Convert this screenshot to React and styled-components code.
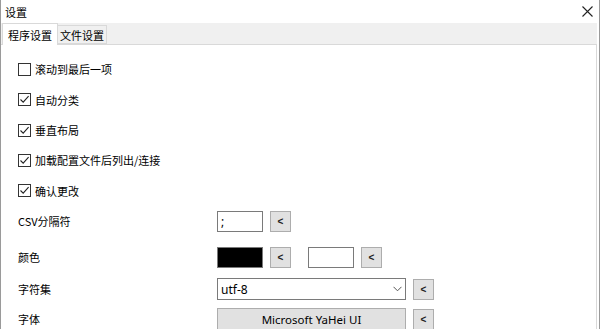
import React from "react";
import styled, { createGlobalStyle } from "styled-components";

const Global = createGlobalStyle`
  html, body { margin: 0; padding: 0; background: #fff; }
  body { width: 600px; height: 329px; overflow: hidden;
    font-family: "Microsoft YaHei UI", "Noto Sans CJK SC", "Noto Sans", sans-serif;
    font-size: 11px; color: #000; }
`;

const Window = styled.div`
  width: 598px;
  height: 329px;
  border-left: 1px solid #9a9a9a;
  border-right: 1px solid #9a9a9a;
  display: flex;
  flex-direction: column;
  background: #fff;
  overflow: hidden;
`;

const TitleBar = styled.div`
  height: 23px;
  flex: none;
  display: flex;
  align-items: center;
  justify-content: space-between;
  padding: 0 6px 0 4px;
`;

const Title = styled.span`
  font-size: 11px;
  line-height: 16px;
`;

const TabStrip = styled.div`
  height: 21px;
  flex: none;
  background: #f0f0f0;
  display: flex;
  align-items: flex-end;
  padding-left: 1px;
  margin-right: 2px;
  position: relative;
  z-index: 1;
`;

const Tab = styled.div`
  height: ${(p) => (p.$active ? "22px" : "19px")};
  margin-bottom: ${(p) => (p.$active ? "-1px" : "0")};
  padding: 0 ${(p) => (p.$active ? "5px" : "2px")};
  box-sizing: border-box;
  display: flex;
  align-items: center;
  background: ${(p) => (p.$active ? "#fff" : "#f0f0f0")};
  border: 1px solid #d9d9d9;
  border-bottom: ${(p) => (p.$active ? "none" : "1px solid #d9d9d9")};
  margin-left: ${(p) => (p.$active ? "0" : "-1px")};
  font-size: 11px;
`;

const Panel = styled.div`
  flex: 1;
  border: 1px solid #d9d9d9;
  border-left: none;
  margin-right: 2px;
  background: #fff;
  padding: 9px 0 0 17px;
  display: flex;
  flex-direction: column;
`;

const Row = styled.div`
  height: ${(p) => p.$h}px;
  flex: none;
  display: flex;
  align-items: center;
`;

const Label = styled.div`
  width: 199px;
  flex: none;
  font-size: 11px;
`;

const CheckLabel = styled.label`
  display: flex;
  align-items: center;
  gap: 4px;
  font-size: 11px;
`;

const Box = styled.span`
  width: 13px;
  height: 13px;
  box-sizing: border-box;
  border: 1px solid #333;
  background: #fff;
  display: flex;
  align-items: center;
  justify-content: center;
`;

const Controls = styled.div`
  display: flex;
  align-items: center;
`;

const TextBox = styled.div`
  width: ${(p) => p.$w}px;
  height: ${(p) => p.$hgt || 21}px;
  box-sizing: border-box;
  border: 1px solid #7a7a7a;
  background: #fff;
  padding: 0 3px;
  display: flex;
  align-items: center;
  justify-content: space-between;
  font-family: "Noto Sans", "Noto Sans CJK SC", sans-serif;
  font-size: 12px;
`;

const Swatch = styled.div`
  width: 46px;
  height: 21px;
  box-sizing: border-box;
  border: 1px solid #7a7a7a;
  background: ${(p) => p.$color};
  margin-right: ${(p) => p.$mr || 0}px;
`;

const SmallButton = styled.button`
  width: 21px;
  height: 21px;
  margin-left: 7px;
  margin-right: ${(p) => p.$mr || 0}px;
  padding: 0;
  box-sizing: border-box;
  border: 1px solid #adadad;
  background: #e1e1e1;
  font-family: "Liberation Sans", Arial, sans-serif;
  font-size: 10px;
  font-weight: bold;
  color: #222;
  display: flex;
  align-items: center;
  justify-content: center;
`;

const WideButton = styled.button`
  width: 189px;
  height: 22px;
  padding: 0;
  box-sizing: border-box;
  border: 1px solid #adadad;
  background: #e1e1e1;
  font-family: "Noto Sans", "Noto Sans CJK SC", sans-serif;
  font-size: 11.5px;
  color: #000;
`;

const CloseIcon = () => (
  <svg width="11" height="11" viewBox="0 0 11 11">
    <path d="M0.5 0.5 L10.5 10.5 M10.5 0.5 L0.5 10.5" stroke="#222" strokeWidth="1.1" fill="none" />
  </svg>
);

const Check = () => (
  <svg width="11" height="11" viewBox="0 0 11 11">
    <path d="M1.5 5.5 L4.2 8.2 L9.6 2.2" stroke="#222" strokeWidth="1.1" fill="none" />
  </svg>
);

const Chevron = () => (
  <svg width="9" height="6" viewBox="0 0 9 6">
    <path d="M0.5 0.8 L4.5 4.8 L8.5 0.8" stroke="#555" strokeWidth="1" fill="none" />
  </svg>
);

const CheckItem = ({ checked, children }) => (
  <CheckLabel>
    <Box>{checked && <Check />}</Box>
    {children}
  </CheckLabel>
);

export default function App() {
  return (
    <>
      <Global />
      <Window>
        <TitleBar>
          <Title>设置</Title>
          <CloseIcon />
        </TitleBar>
        <TabStrip>
          <Tab $active>程序设置</Tab>
          <Tab>文件设置</Tab>
        </TabStrip>
        <Panel>
          <Row $h={30}><CheckItem>滚动到最后一项</CheckItem></Row>
          <Row $h={31}><CheckItem checked>自动分类</CheckItem></Row>
          <Row $h={30}><CheckItem checked>垂直布局</CheckItem></Row>
          <Row $h={30}><CheckItem checked>加载配置文件后列出/连接</CheckItem></Row>
          <Row $h={31}><CheckItem checked>确认更改</CheckItem></Row>
          <Row $h={30}>
            <Label>CSV分隔符</Label>
            <Controls>
              <TextBox $w={46}>;</TextBox>
              <SmallButton>&lt;</SmallButton>
            </Controls>
          </Row>
          <Row $h={42}>
            <Label>颜色</Label>
            <Controls>
              <Swatch $color="#000" />
              <SmallButton $mr={17}>&lt;</SmallButton>
              <Swatch $color="#fff" />
              <SmallButton>&lt;</SmallButton>
            </Controls>
          </Row>
          <Row $h={22}>
            <Label>字符集</Label>
            <Controls>
              <TextBox $w={189} $hgt={22}>
                <span>utf-8</span>
                <Chevron />
              </TextBox>
              <SmallButton>&lt;</SmallButton>
            </Controls>
          </Row>
          <Row $h={38}>
            <Label>字体</Label>
            <Controls>
              <WideButton>Microsoft YaHei UI</WideButton>
              <SmallButton>&lt;</SmallButton>
            </Controls>
          </Row>
        </Panel>
      </Window>
    </>
  );
}
